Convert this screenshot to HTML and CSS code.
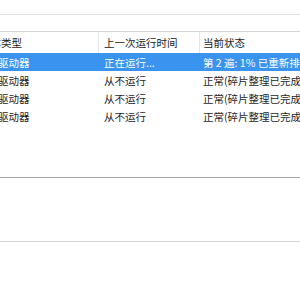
FILE: index.html
```
<!DOCTYPE html>
<html lang="zh-CN">
<head>
    <meta charset="UTF-8">
    <title>优化驱动器</title>
    <link rel="stylesheet" href="styles.css">
</head>
<body>

    <!-- Top strip -->
    <div class="top-strip"></div>

    <!-- Drive list -->
    <div class="drive-list">
        <div class="list-header">
            <div class="cell col-type">媒体类型</div>
            <div class="cell col-last">上一次运行时间</div>
            <div class="cell col-state">当前状态</div>
        </div>
        <div class="list-row selected">
            <div class="cell col-type">硬盘驱动器</div>
            <div class="cell col-last">正在运行...</div>
            <div class="cell col-state">第 2 遍: 1% 已重新排列</div>
        </div>
        <div class="list-row">
            <div class="cell col-type">硬盘驱动器</div>
            <div class="cell col-last">从不运行</div>
            <div class="cell col-state">正常(碎片整理已完成 0%)</div>
        </div>
        <div class="list-row">
            <div class="cell col-type">硬盘驱动器</div>
            <div class="cell col-last">从不运行</div>
            <div class="cell col-state">正常(碎片整理已完成 0%)</div>
        </div>
        <div class="list-row">
            <div class="cell col-type">硬盘驱动器</div>
            <div class="cell col-last">从不运行</div>
            <div class="cell col-state">正常(碎片整理已完成 0%)</div>
        </div>
    </div>

    <!-- Lower panels -->
    <div class="panel"></div>

</body>
</html>
```

FILE: styles.css
```
/* Global Styles */
body {
    margin: 0;
    padding: 0;
    width: 300px;
    height: 300px;
    overflow: hidden;
    background-color: #fff;
    font-family: "Noto Sans CJK SC", "Noto Sans", sans-serif;
    font-size: 10.5px;
    color: #222;
}

.top-strip {
    height: 14px;
    border-bottom: 1px solid #e2e2e2;
}

/* List Styles */
.drive-list {
    margin-top: 16px;
    margin-left: -27px;
    width: 334px;
    height: 145px;
    border-top: 1px solid #d5d5d5;
    border-bottom: 1px solid #a9a9a9;
}

.list-header,
.list-row {
    display: grid;
    grid-template-columns: 126px 101px 1fr;
}

.list-header {
    height: 21px;
    align-items: center;
    color: #1a1a1a;
}

.list-header .col-type,
.list-header .col-last {
    border-right: 1px solid #e5e5e5;
    height: 100%;
    display: flex;
    align-items: center;
}

.list-header .col-type {
    padding-left: 7px;
}

.list-row {
    height: 18px;
    align-items: center;
    color: #1e1e1e;
}

.list-row .cell {
    padding-top: 2px;
    line-height: 16px;
}

.list-row.selected {
    background-color: #3a93ee;
    color: #fff;
}

.cell {
    white-space: nowrap;
    overflow: hidden;
    line-height: 18px;
}

.col-type {
    padding-left: 4px;
}

.col-last {
    padding-left: 5px;
}

.col-state {
    padding-left: 3px;
}

/* Panel Styles */
.panel {
    height: 63px;
    border-bottom: 1px solid #d4d4d4;
}
```
